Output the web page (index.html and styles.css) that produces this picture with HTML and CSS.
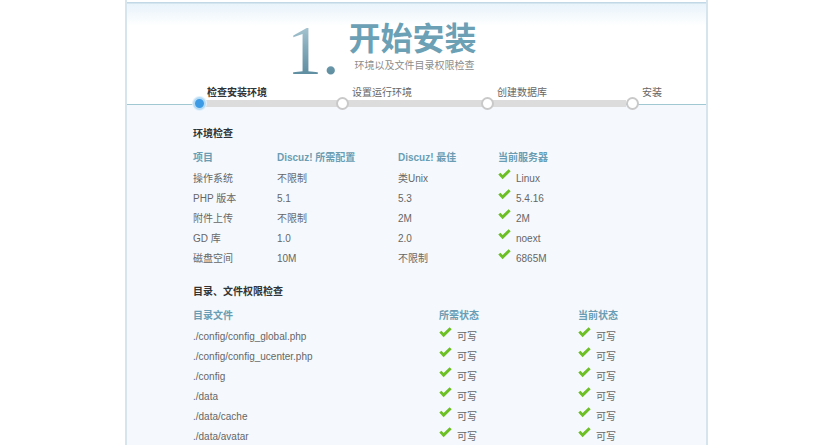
FILE: index.html
```html
<!DOCTYPE html>
<html lang="zh-CN">
<head>
<meta charset="utf-8">
<title>Discuz! 安装向导</title>
<link rel="stylesheet" href="styles.css">
</head>
<body>
<div class="wrap">
  <div class="header">
    <div class="title">
      <span class="num">1.</span>
      <div class="title-text">
        <h1>开始安装</h1>
        <p>环境以及文件目录权限检查</p>
      </div>
    </div>
    <div class="steps">
      <div class="step current">
        <span class="label">检查安装环境</span>
        <div class="track"><span class="dot"></span></div>
      </div>
      <div class="step">
        <span class="label">设置运行环境</span>
        <div class="track"><span class="dot"></span></div>
      </div>
      <div class="step">
        <span class="label">创建数据库</span>
        <div class="track"><span class="dot"></span></div>
      </div>
      <div class="step last">
        <span class="label">安装</span>
        <div class="track"><span class="dot"></span></div>
      </div>
    </div>
  </div>
  <div class="main">
    <h3>环境检查</h3>
    <table class="tb env">
      <colgroup><col class="c1"><col class="c2"><col class="c3"><col></colgroup>
      <thead>
        <tr><th>项目</th><th>Discuz! 所需配置</th><th>Discuz! 最佳</th><th>当前服务器</th></tr>
      </thead>
      <tbody>
        <tr><td>操作系统</td><td>不限制</td><td>类Unix</td><td><svg class="chk" viewBox="0 0 13 11"><path d="M0.3 5.6 L2.4 3.7 L4.6 5.9 L10.6 0.2 L12.7 2.2 L4.6 10.3 Z"/></svg>Linux</td></tr>
        <tr><td>PHP 版本</td><td>5.1</td><td>5.3</td><td><svg class="chk" viewBox="0 0 13 11"><path d="M0.3 5.6 L2.4 3.7 L4.6 5.9 L10.6 0.2 L12.7 2.2 L4.6 10.3 Z"/></svg>5.4.16</td></tr>
        <tr><td>附件上传</td><td>不限制</td><td>2M</td><td><svg class="chk" viewBox="0 0 13 11"><path d="M0.3 5.6 L2.4 3.7 L4.6 5.9 L10.6 0.2 L12.7 2.2 L4.6 10.3 Z"/></svg>2M</td></tr>
        <tr><td>GD 库</td><td>1.0</td><td>2.0</td><td><svg class="chk" viewBox="0 0 13 11"><path d="M0.3 5.6 L2.4 3.7 L4.6 5.9 L10.6 0.2 L12.7 2.2 L4.6 10.3 Z"/></svg>noext</td></tr>
        <tr><td>磁盘空间</td><td>10M</td><td>不限制</td><td><svg class="chk" viewBox="0 0 13 11"><path d="M0.3 5.6 L2.4 3.7 L4.6 5.9 L10.6 0.2 L12.7 2.2 L4.6 10.3 Z"/></svg>6865M</td></tr>
      </tbody>
    </table>
    <h3 class="sec2">目录、文件权限检查</h3>
    <table class="tb dirs">
      <colgroup><col class="d1"><col class="d2"><col></colgroup>
      <thead>
        <tr><th>目录文件</th><th>所需状态</th><th>当前状态</th></tr>
      </thead>
      <tbody>
        <tr><td>./config/config_global.php</td><td><svg class="chk" viewBox="0 0 13 11"><path d="M0.3 5.6 L2.4 3.7 L4.6 5.9 L10.6 0.2 L12.7 2.2 L4.6 10.3 Z"/></svg>可写</td><td><svg class="chk" viewBox="0 0 13 11"><path d="M0.3 5.6 L2.4 3.7 L4.6 5.9 L10.6 0.2 L12.7 2.2 L4.6 10.3 Z"/></svg>可写</td></tr>
        <tr><td>./config/config_ucenter.php</td><td><svg class="chk" viewBox="0 0 13 11"><path d="M0.3 5.6 L2.4 3.7 L4.6 5.9 L10.6 0.2 L12.7 2.2 L4.6 10.3 Z"/></svg>可写</td><td><svg class="chk" viewBox="0 0 13 11"><path d="M0.3 5.6 L2.4 3.7 L4.6 5.9 L10.6 0.2 L12.7 2.2 L4.6 10.3 Z"/></svg>可写</td></tr>
        <tr><td>./config</td><td><svg class="chk" viewBox="0 0 13 11"><path d="M0.3 5.6 L2.4 3.7 L4.6 5.9 L10.6 0.2 L12.7 2.2 L4.6 10.3 Z"/></svg>可写</td><td><svg class="chk" viewBox="0 0 13 11"><path d="M0.3 5.6 L2.4 3.7 L4.6 5.9 L10.6 0.2 L12.7 2.2 L4.6 10.3 Z"/></svg>可写</td></tr>
        <tr><td>./data</td><td><svg class="chk" viewBox="0 0 13 11"><path d="M0.3 5.6 L2.4 3.7 L4.6 5.9 L10.6 0.2 L12.7 2.2 L4.6 10.3 Z"/></svg>可写</td><td><svg class="chk" viewBox="0 0 13 11"><path d="M0.3 5.6 L2.4 3.7 L4.6 5.9 L10.6 0.2 L12.7 2.2 L4.6 10.3 Z"/></svg>可写</td></tr>
        <tr><td>./data/cache</td><td><svg class="chk" viewBox="0 0 13 11"><path d="M0.3 5.6 L2.4 3.7 L4.6 5.9 L10.6 0.2 L12.7 2.2 L4.6 10.3 Z"/></svg>可写</td><td><svg class="chk" viewBox="0 0 13 11"><path d="M0.3 5.6 L2.4 3.7 L4.6 5.9 L10.6 0.2 L12.7 2.2 L4.6 10.3 Z"/></svg>可写</td></tr>
        <tr><td>./data/avatar</td><td><svg class="chk" viewBox="0 0 13 11"><path d="M0.3 5.6 L2.4 3.7 L4.6 5.9 L10.6 0.2 L12.7 2.2 L4.6 10.3 Z"/></svg>可写</td><td><svg class="chk" viewBox="0 0 13 11"><path d="M0.3 5.6 L2.4 3.7 L4.6 5.9 L10.6 0.2 L12.7 2.2 L4.6 10.3 Z"/></svg>可写</td></tr>
      </tbody>
    </table>
  </div>
</div>
</body>
</html>
```
FILE: styles.css
```css
* { box-sizing: border-box; }
html, body { height: 445px; overflow: hidden; }
body {
  margin: 0;
  background: #fff;
  font-family: "Liberation Sans", "Noto Sans CJK SC", sans-serif;
  font-size: 10px;
  color: #666;
}
.wrap {
  width: 583px;
  margin: 0 0 0 125px;
  min-height: 445px;
  border-left: 2px solid #d6e4ee;
  border-right: 2px solid #d6e4ee;
  background: #f5f9fd;
}
.header {
  height: 105px;
  display: flex;
  flex-direction: column;
  border-bottom: 1px solid #9fc8d3;
  background: linear-gradient(to bottom, #fff 0, #fff 2px, #c3d8e6 2px, #c3d8e6 3px, #e8f3fa 4px, #fff 26px, #fff 100%);
}
.title {
  flex: none;
  display: flex;
  align-items: flex-start;
  padding: 16px 0 0 160px;
  height: 88px;
}
.num {
  font-family: "Liberation Serif", serif;
  font-size: 70px;
  line-height: 70px;
  background: linear-gradient(to bottom, #b8d2dc 0%, #83aaba 45%, #4f8196 100%);
  -webkit-background-clip: text;
  background-clip: text;
  color: transparent;
}
.title-text { margin-left: 9px; padding-top: 3px; }
.title-text h1 {
  margin: 0;
  font-family: "Noto Sans CJK SC", sans-serif;
  font-size: 32px;
  line-height: 34px;
  font-weight: bold;
  color: #6ba0b5;
}
.title-text p {
  margin: 7px 0 0 6px;
  font-size: 10px;
  line-height: 12px;
  color: #8c8c8c;
}
.steps {
  flex: none;
  display: flex;
  padding-left: 66px;
  position: relative;
  z-index: 1;
}
.step { display: flex; flex-direction: column; width: 145px; }
.step:first-child { width: 143px; }
.step.last { width: auto; }
.label { padding-left: 16px; line-height: 10px; height: 10px; color: #666; }
.step.current .label { padding-left: 14px; font-weight: bold; color: #333; }
.track {
  height: 13px;
  margin-top: -1px;
  background: linear-gradient(#dcdcdc, #dcdcdc) no-repeat left center / 100% 7px;
}
.step.last .track { background: none; }
.dot {
  display: block;
  width: 13px;
  height: 13px;
  border-radius: 50%;
  background: #fff;
  border: 2px solid #c9c9c9;
}
.step.current .dot {
  background: #3d9be6;
  border: 2px solid #b6dcf5;
  box-shadow: 0 0 0 1px #e3f1fb;
}
.main { padding: 19px 0 0 66px; }
.main h3 {
  margin: 0 0 4px;
  font-size: 10px;
  line-height: 20px;
  font-weight: bold;
  color: #333;
}
.main h3.sec2 { margin-top: 13px; }
.tb { border-collapse: collapse; table-layout: fixed; }
.tb th, .tb td { padding: 0; text-align: left; white-space: nowrap; }
.tb th { height: 21px; vertical-align: top; line-height: 20px; font-weight: bold; color: #6a9db3; }
.tb td { height: 20px; line-height: 20px; }
.env { width: 450px; }
.env .c1 { width: 84px; }
.env .c2 { width: 121px; }
.env .c3 { width: 100px; }
.dirs { width: 450px; }
.dirs .d1 { width: 246px; }
.dirs .d2 { width: 139px; }
.chk {
  width: 13px;
  height: 11px;
  fill: #6cbf24;
  vertical-align: 2px;
  margin-right: 5px;
}
```
